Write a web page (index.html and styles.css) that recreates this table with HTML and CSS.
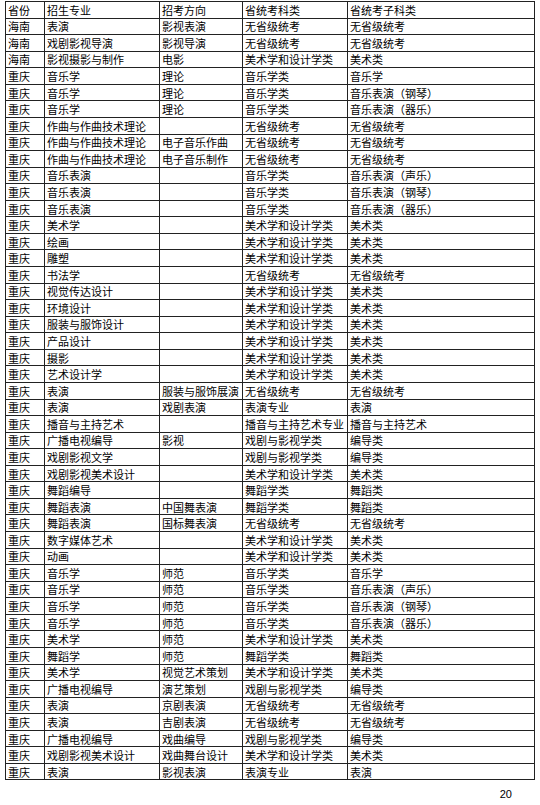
FILE: index.html
```html
<!DOCTYPE html>
<html lang="zh">
<head>
<meta charset="utf-8">
<link rel="stylesheet" href="styles.css">
</head>
<body>
<table class="sheet">
<colgroup><col class="c1"><col class="c2"><col class="c3"><col class="c4"><col class="c5"></colgroup>
<tbody>
<tr><td>省份</td><td>招生专业</td><td>招考方向</td><td>省统考科类</td><td>省统考子科类</td></tr>
<tr><td>海南</td><td>表演</td><td>影视表演</td><td>无省级统考</td><td>无省级统考</td></tr>
<tr><td>海南</td><td>戏剧影视导演</td><td>影视导演</td><td>无省级统考</td><td>无省级统考</td></tr>
<tr><td>海南</td><td>影视摄影与制作</td><td>电影</td><td>美术学和设计学类</td><td>美术类</td></tr>
<tr><td>重庆</td><td>音乐学</td><td>理论</td><td>音乐学类</td><td>音乐学</td></tr>
<tr><td>重庆</td><td>音乐学</td><td>理论</td><td>音乐学类</td><td>音乐表演（钢琴）</td></tr>
<tr><td>重庆</td><td>音乐学</td><td>理论</td><td>音乐学类</td><td>音乐表演（器乐）</td></tr>
<tr><td>重庆</td><td>作曲与作曲技术理论</td><td></td><td>无省级统考</td><td>无省级统考</td></tr>
<tr><td>重庆</td><td>作曲与作曲技术理论</td><td>电子音乐作曲</td><td>无省级统考</td><td>无省级统考</td></tr>
<tr><td>重庆</td><td>作曲与作曲技术理论</td><td>电子音乐制作</td><td>无省级统考</td><td>无省级统考</td></tr>
<tr><td>重庆</td><td>音乐表演</td><td></td><td>音乐学类</td><td>音乐表演（声乐）</td></tr>
<tr><td>重庆</td><td>音乐表演</td><td></td><td>音乐学类</td><td>音乐表演（钢琴）</td></tr>
<tr><td>重庆</td><td>音乐表演</td><td></td><td>音乐学类</td><td>音乐表演（器乐）</td></tr>
<tr><td>重庆</td><td>美术学</td><td></td><td>美术学和设计学类</td><td>美术类</td></tr>
<tr><td>重庆</td><td>绘画</td><td></td><td>美术学和设计学类</td><td>美术类</td></tr>
<tr><td>重庆</td><td>雕塑</td><td></td><td>美术学和设计学类</td><td>美术类</td></tr>
<tr><td>重庆</td><td>书法学</td><td></td><td>无省级统考</td><td>无省级统考</td></tr>
<tr><td>重庆</td><td>视觉传达设计</td><td></td><td>美术学和设计学类</td><td>美术类</td></tr>
<tr><td>重庆</td><td>环境设计</td><td></td><td>美术学和设计学类</td><td>美术类</td></tr>
<tr><td>重庆</td><td>服装与服饰设计</td><td></td><td>美术学和设计学类</td><td>美术类</td></tr>
<tr><td>重庆</td><td>产品设计</td><td></td><td>美术学和设计学类</td><td>美术类</td></tr>
<tr><td>重庆</td><td>摄影</td><td></td><td>美术学和设计学类</td><td>美术类</td></tr>
<tr><td>重庆</td><td>艺术设计学</td><td></td><td>美术学和设计学类</td><td>美术类</td></tr>
<tr><td>重庆</td><td>表演</td><td>服装与服饰展演</td><td>无省级统考</td><td>无省级统考</td></tr>
<tr><td>重庆</td><td>表演</td><td>戏剧表演</td><td>表演专业</td><td>表演</td></tr>
<tr><td>重庆</td><td>播音与主持艺术</td><td></td><td>播音与主持艺术专业</td><td>播音与主持艺术</td></tr>
<tr><td>重庆</td><td>广播电视编导</td><td>影视</td><td>戏剧与影视学类</td><td>编导类</td></tr>
<tr><td>重庆</td><td>戏剧影视文学</td><td></td><td>戏剧与影视学类</td><td>编导类</td></tr>
<tr><td>重庆</td><td>戏剧影视美术设计</td><td></td><td>美术学和设计学类</td><td>美术类</td></tr>
<tr><td>重庆</td><td>舞蹈编导</td><td></td><td>舞蹈学类</td><td>舞蹈类</td></tr>
<tr><td>重庆</td><td>舞蹈表演</td><td>中国舞表演</td><td>舞蹈学类</td><td>舞蹈类</td></tr>
<tr><td>重庆</td><td>舞蹈表演</td><td>国标舞表演</td><td>无省级统考</td><td>无省级统考</td></tr>
<tr><td>重庆</td><td>数字媒体艺术</td><td></td><td>美术学和设计学类</td><td>美术类</td></tr>
<tr><td>重庆</td><td>动画</td><td></td><td>美术学和设计学类</td><td>美术类</td></tr>
<tr><td>重庆</td><td>音乐学</td><td>师范</td><td>音乐学类</td><td>音乐学</td></tr>
<tr><td>重庆</td><td>音乐学</td><td>师范</td><td>音乐学类</td><td>音乐表演（声乐）</td></tr>
<tr><td>重庆</td><td>音乐学</td><td>师范</td><td>音乐学类</td><td>音乐表演（钢琴）</td></tr>
<tr><td>重庆</td><td>音乐学</td><td>师范</td><td>音乐学类</td><td>音乐表演（器乐）</td></tr>
<tr><td>重庆</td><td>美术学</td><td>师范</td><td>美术学和设计学类</td><td>美术类</td></tr>
<tr><td>重庆</td><td>舞蹈学</td><td>师范</td><td>舞蹈学类</td><td>舞蹈类</td></tr>
<tr><td>重庆</td><td>美术学</td><td>视觉艺术策划</td><td>美术学和设计学类</td><td>美术类</td></tr>
<tr><td>重庆</td><td>广播电视编导</td><td>演艺策划</td><td>戏剧与影视学类</td><td>编导类</td></tr>
<tr><td>重庆</td><td>表演</td><td>京剧表演</td><td>无省级统考</td><td>无省级统考</td></tr>
<tr><td>重庆</td><td>表演</td><td>吉剧表演</td><td>无省级统考</td><td>无省级统考</td></tr>
<tr><td>重庆</td><td>广播电视编导</td><td>戏曲编导</td><td>戏剧与影视学类</td><td>编导类</td></tr>
<tr><td>重庆</td><td>戏剧影视美术设计</td><td>戏曲舞台设计</td><td>美术学和设计学类</td><td>美术类</td></tr>
<tr><td>重庆</td><td>表演</td><td>影视表演</td><td>表演专业</td><td>表演</td></tr>
</tbody>
</table>
<div class="page-num">20</div>
</body>
</html>
```

FILE: styles.css
```css
html, body {
  margin: 0;
  padding: 0;
  background: #ffffff;
}
body {
  font-family: "Noto Sans CJK SC", "Liberation Sans", sans-serif;
  color: #000000;
}
.sheet {
  margin: 1px 0 0 5px;
  border-collapse: collapse;
  table-layout: fixed;
  width: 530px;
  font-size: 11px;
}
.c1 { width: 39px; }
.c2 { width: 115px; }
.c3 { width: 83px; }
.c4 { width: 105px; }
.c5 { width: 187px; }
.sheet tr {
  height: 16.57px;
}
.sheet td {
  border: 1px solid #222222;
  padding: 0 0 0 2px;
  line-height: 14px;
  white-space: nowrap;
  overflow: hidden;
  vertical-align: middle;
}
.page-num {
  width: 512px;
  margin-top: 8px;
  text-align: right;
  font-family: "Liberation Sans", Arial, sans-serif;
  font-size: 11px;
  line-height: 12px;
}
```
